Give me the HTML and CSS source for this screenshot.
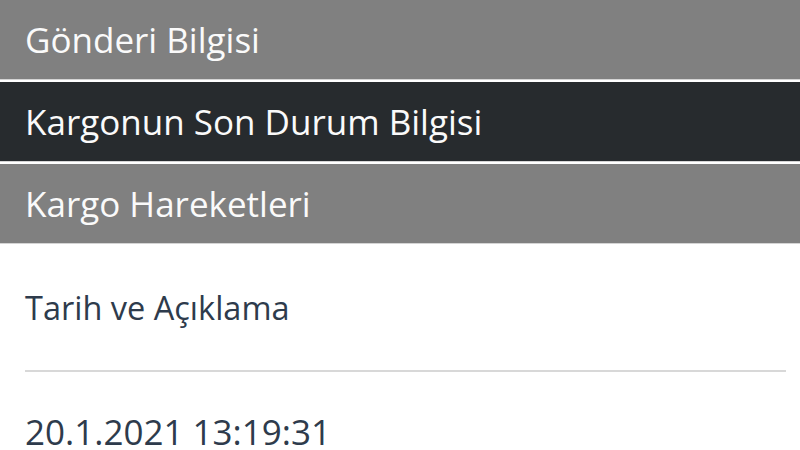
FILE: index.html
```html
<!DOCTYPE html>
<html lang="tr">
<head>
    <meta charset="UTF-8">
    <meta name="viewport" content="width=device-width, initial-scale=1.0">
    <title>Kargo Takip</title>
    <link rel="stylesheet" href="styles.css">
</head>
<body>
    <div class="tabs">
        <div class="tab">Gönderi Bilgisi</div>
        <div class="tab active">Kargonun Son Durum Bilgisi</div>
        <div class="tab">Kargo Hareketleri</div>
    </div>
    <div class="moves">
        <div class="moves-head">Tarih ve Açıklama</div>
        <div class="moves-row">20.1.2021 13:19:31</div>
    </div>
</body>
</html>
```

FILE: styles.css
```css
body {
    margin: 0;
    background-color: #ffffff;
    font-family: 'Open Sans', 'Noto Sans', sans-serif;
    overflow: hidden;
}
.tab {
    height: 79px;
    line-height: 79px;
    padding-left: 25px;
    font-size: 35px;
    background-color: #808080;
    color: #fafafa;
    border-bottom: 1px solid #d4d4d4;
    margin-bottom: 2px;
}
.tab.active {
    background-color: #272b2e;
}
.moves {
    padding: 40px 14px 0 25px;
    color: #2e3b4c;
}
.moves-head {
    font-size: 32.5px;
    line-height: 44px;
    padding-bottom: 40px;
    border-bottom: 2px solid #d8d8d8;
}
.moves-row {
    font-size: 35px;
    line-height: 44px;
    padding-top: 38px;
}
```
